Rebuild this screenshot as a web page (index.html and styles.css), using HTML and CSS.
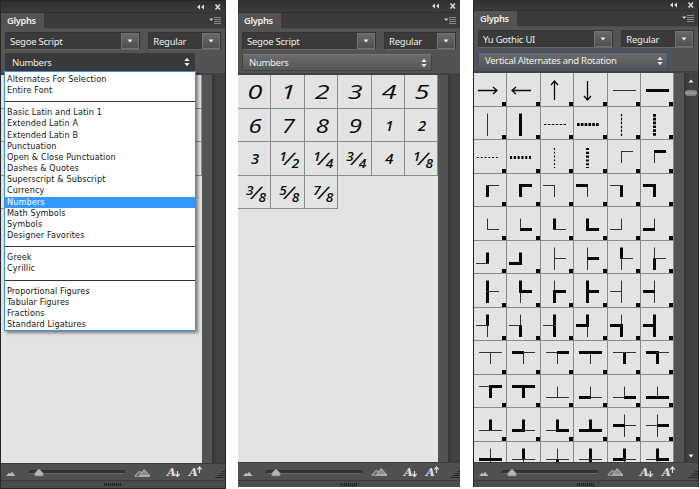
FILE: index.html
```
<!DOCTYPE html>
<html lang="en">
<head>
<meta charset="utf-8">
<title>Glyphs panels</title>
<link rel="stylesheet" href="styles.css">
</head>
<body>
<svg class="defs" aria-hidden="true">
  <symbol id="collapse" viewBox="0 0 17 8"><path d="M0 4L3 1.500V6.500zM4 4L7 1.500V6.500z" fill="#ddd"/></symbol>
  <symbol id="close" viewBox="0 0 8 8"><path d="M1.500 1.500L6 6.500M6 1.500L1.500 6.500" stroke="#ddd" stroke-width="1.500"/></symbol>
  <symbol id="menu" viewBox="0 0 13 9"><path d="M0 2.500H4.500L2.200 5z" fill="#ccc"/><path d="M5 1.500H12M5 3.500H12M5 5.500H12M5 7.500H12" stroke="#929292" stroke-width=".9"/></symbol>
  <symbol id="down" viewBox="0 0 6 4"><path d="M.5 .5H5.500L3 3.500z" fill="#ededed"/></symbol>
  <symbol id="updown" viewBox="0 0 6 10"><path d="M.3 4L3 .8L5.700 4zM.3 6L3 9.200L5.700 6z" fill="#e4e4e4"/></symbol>
  <symbol id="hill" viewBox="0 0 10 5"><path d="M0 5L3 1.800L4.300 3L6 .8L9.500 5z" fill="#bbb"/></symbol>
  <symbol id="hills" viewBox="0 0 17 9"><path d="M.8 8L5.500 3L8 5.500" stroke="#b8b8b8" fill="#777"/><path d="M5.500 8L10.200 1.500L16 8z" fill="#8c8c8c" stroke="#c4c4c4" stroke-width=".8"/><path d="M.8 8.200H16" stroke="#ccc" stroke-width=".8"/></symbol>
  <symbol id="thumb" viewBox="0 0 10 9"><path d="M5 .8L9.200 5V8H.8V5z" fill="#b5b5b5" stroke="#777" stroke-width=".6"/></symbol>
  <symbol id="smaller" viewBox="0 0 5 8"><path d="M2.500 1V5.500M.3 4L2.500 6.500L4.700 4" fill="none" stroke="#ddd" stroke-width="1.200"/></symbol>
  <symbol id="larger" viewBox="0 0 5 8"><path d="M2.500 2V7M.3 3.500L2.500 1L4.700 3.500" fill="none" stroke="#ddd" stroke-width="1.200"/></symbol>
  <symbol id="resize" viewBox="0 0 10 9"><path d="M7 2.500H10M4.500 4.500H10M2.500 6.500H10M0 8.500H10" stroke="#282828"/></symbol>
</svg>

<main class="stage">
  <section class="panel first">
    <header class="titlebar"><svg class="i-collapse"><use href="#collapse"/></svg><svg class="i-close"><use href="#close"/></svg></header>
    <nav class="tabs"><span class="tab">Glyphs</span><svg class="i-menu"><use href="#menu"/></svg></nav>
    <div class="controls">
      <div class="row">
        <div class="combo family"><span>Segoe Script</span><i><svg><use href="#down"/></svg></i></div>
        <div class="combo style"><span>Regular</span><i><svg><use href="#down"/></svg></i></div>
      </div>
      <div class="select open"><span>Numbers</span><svg><use href="#updown"/></svg>
        <ul class="options">
          <li>Alternates For Selection</li><li>Entire Font</li><li class="sep"></li>
          <li>Basic Latin and Latin 1</li><li>Extended Latin A</li><li>Extended Latin B</li><li>Punctuation</li><li>Open &amp; Close Punctuation</li><li>Dashes &amp; Quotes</li><li>Superscript &amp; Subscript</li><li>Currency</li><li class="on">Numbers</li><li>Math Symbols</li><li>Symbols</li><li>Designer Favorites</li><li class="sep"></li>
          <li>Greek</li><li>Cyrillic</li><li class="sep"></li>
          <li>Proportional Figures</li><li>Tabular Figures</li><li>Fractions</li><li>Standard Ligatures</li>
        </ul>
      </div>
    </div>
    <div class="view"><div class="grid" data-blank="21"></div><div class="gutter"></div><div class="track"></div></div>
    <footer class="zoombar"><svg class="i-hill"><use href="#hill"/></svg><div class="slider"><svg><use href="#thumb"/></svg></div><svg class="i-hills"><use href="#hills"/></svg><span class="size a1">A<svg><use href="#smaller"/></svg></span><span class="size a2">A<svg><use href="#larger"/></svg></span><svg class="i-resize"><use href="#resize"/></svg></footer>
    <div class="grip"><i></i></div>
  </section>

  <section class="panel second">
    <header class="titlebar"><svg class="i-collapse"><use href="#collapse"/></svg><svg class="i-close"><use href="#close"/></svg></header>
    <nav class="tabs"><span class="tab">Glyphs</span><svg class="i-menu"><use href="#menu"/></svg></nav>
    <div class="controls">
      <div class="row">
        <div class="combo family"><span>Segoe Script</span><i><svg><use href="#down"/></svg></i></div>
        <div class="combo style"><span>Regular</span><i><svg><use href="#down"/></svg></i></div>
      </div>
      <div class="select"><span>Numbers</span><svg><use href="#updown"/></svg></div>
    </div>
    <div class="view">
      <div class="grid">
        <div class="cell"><b>0</b></div><div class="cell"><b>1</b></div><div class="cell"><b>2</b></div><div class="cell"><b>3</b></div><div class="cell"><b>4</b></div><div class="cell"><b>5</b></div>
        <div class="cell"><b class="m">6</b></div><div class="cell"><b class="m">7</b></div><div class="cell"><b class="m">8</b></div><div class="cell"><b class="m">9</b></div><div class="cell"><b class="s">1</b></div><div class="cell"><b class="s">2</b></div>
        <div class="cell"><b class="s">3</b></div><div class="cell"><b class="f"><u>1</u><em>/</em><s>2</s></b></div><div class="cell"><b class="f"><u>1</u><em>/</em><s>4</s></b></div><div class="cell"><b class="f"><u>3</u><em>/</em><s>4</s></b></div><div class="cell"><b class="s">4</b></div><div class="cell"><b class="f"><u>1</u><em>/</em><s>8</s></b></div>
        <div class="cell"><b class="f"><u>3</u><em>/</em><s>8</s></b></div><div class="cell"><b class="f"><u>5</u><em>/</em><s>8</s></b></div><div class="cell"><b class="f"><u>7</u><em>/</em><s>8</s></b></div>
      </div>
      <div class="gutter"></div><div class="track"></div>
    </div>
    <footer class="zoombar"><svg class="i-hill"><use href="#hill"/></svg><div class="slider"><svg><use href="#thumb"/></svg></div><svg class="i-hills"><use href="#hills"/></svg><span class="size a1">A<svg><use href="#smaller"/></svg></span><span class="size a2">A<svg><use href="#larger"/></svg></span><svg class="i-resize"><use href="#resize"/></svg></footer>
    <div class="grip"><i></i></div>
  </section>

  <section class="panel third">
    <header class="titlebar"><svg class="i-collapse"><use href="#collapse"/></svg><svg class="i-close"><use href="#close"/></svg></header>
    <nav class="tabs"><span class="tab">Glyphs</span><svg class="i-menu"><use href="#menu"/></svg></nav>
    <div class="controls">
      <div class="row">
        <div class="combo family"><span>Yu Gothic UI</span><i><svg><use href="#down"/></svg></i></div>
        <div class="combo style"><span>Regular</span><i><svg><use href="#down"/></svg></i></div>
      </div>
      <div class="select focus"><span>Vertical Alternates and Rotation</span><svg><use href="#updown"/></svg></div>
    </div>
    <div class="view"><div class="grid" id="strokes"></div><div class="gutter"></div><div class="track full"><svg class="up"><use href="#down"/></svg><i></i><svg class="dn"><use href="#down"/></svg></div></div>
    <footer class="zoombar"><svg class="i-hill"><use href="#hill"/></svg><div class="slider"><svg><use href="#thumb"/></svg></div><svg class="i-hills"><use href="#hills"/></svg><span class="size a1">A<svg><use href="#smaller"/></svg></span><span class="size a2">A<svg><use href="#larger"/></svg></span><svg class="i-resize"><use href="#resize"/></svg></footer>
    <div class="grip"><i></i></div>
  </section>
</main>
<script src="glyphs.js"></script>
</body>
</html>
```
FILE: styles.css
```
* { box-sizing: border-box; }
body { margin: 0; width: 700px; height: 489px; overflow: hidden; background: #fff; }
.defs { position: absolute; width: 0; height: 0; }
svg { display: block; flex: none; }
.stage { display: flex; align-items: flex-start; }
.panel {
  --top: 13px; --pad: 4px;
  display: flex; flex-direction: column; flex: none;
  width: 222px; height: 487px;
  background: #535353; color: #ededed;
  font: 9.500px "Noto Sans", sans-serif; letter-spacing: -.25px;
}
.first { width: 226px; height: 489px; border: 1px solid #272727; --top: 12px; }
.second { margin-left: 12px; }
.third { width: 226px; margin-left: 13px; border: 1px solid #272727; border-top: 0; border-bottom: 0; --top: 11px; }

.titlebar { height: var(--top); background: linear-gradient(#303030, #3b3b3b); display: flex; align-items: center; justify-content: flex-end; padding-right: 3px; flex: none; border-bottom: 1px solid #303030; }
.i-collapse { width: 17px; height: 8px; }
.i-close { width: 8px; height: 8px; }
.tabs { height: 16px; background: #3a3a3a; display: flex; justify-content: space-between; align-items: center; flex: none; padding-right: 1px; border-bottom: 1px solid #4a4a4a; }
.tab { width: 43px; height: 16px; line-height: 16px; padding-left: 6px; background: #535353; font-weight: 600; font-size: 9.300px; letter-spacing: -.35px; }
.i-menu { width: 13px; height: 9px; margin-right: 2px; }

.controls { height: 46px; padding: 3px 4px 0 var(--pad); flex: none; border-bottom: 2px solid #424242; }
.row { display: flex; gap: 8px; }
.combo { display: flex; height: 18px; background: #3a3a3a; border: 1px solid #343434; border-bottom-color: #676767; line-height: 17px; justify-content: space-between; }
.combo span { padding-left: 4px; }
.combo i { width: 18px; background: linear-gradient(#696969, #505050); border: 1px solid #717171; display: flex; align-items: center; justify-content: center; }
.combo i svg { width: 6px; height: 4px; }
.family { width: 136px; }
.style { width: 73px; }
.select { position: relative; width: 190px; height: 17px; margin-top: 4px; padding: 0 5px 0 6px; display: flex; align-items: center; justify-content: space-between; background: linear-gradient(#6b6b6b, #565656); border: 1px solid #404040; border-top-color: #777; border-radius: 2px; letter-spacing: -.3px; }
.select > svg { width: 6px; height: 10px; margin-right: -1px; }
.open { background: #393939; border-color: #343c48; height: 18px; margin-top: 3px; }
.focus { border-color: #3d5070; box-shadow: 0 0 0 1px #46546c; }
.options { position: absolute; z-index: 2; left: -2px; top: 17px; width: 192px; height: 260px; margin: 0; padding: 1.800px 0 0; list-style: none; background: #fff; border: 1px solid #3d8fdb; border-width: 1px 1.500px; box-shadow: 2px 2px 3px rgba(0,0,0,.45); color: #151515; font: 9px "DejaVu Sans Condensed", "DejaVu Sans", sans-serif; font-stretch: condensed; letter-spacing: .12px; }
.options li { height: 11.170px; line-height: 11.170px; padding-left: 2px; white-space: nowrap; }
.options .sep { background: linear-gradient(#333, #333) 0 5px / 100% 1px no-repeat; }
.options .on { background: #3399ff; color: #fff; }

.view { display: flex; flex: 1; min-height: 0; }
.grid { width: 201px; display: grid; grid-template-columns: repeat(6, 33.500px); grid-auto-rows: 33.500px; align-content: start; background: #e3e3e3; overflow: hidden; }
.second .grid, .third .grid { width: 200px; grid-template-columns: 33px repeat(4, 33.500px) 33px; }
.gutter { width: 10px; background: #535353; }
.track { flex: 1; background: linear-gradient(90deg, #343434, #414141 40%, #424242); }
.cell { position: relative; border-right: 1px solid #8b8b8b; border-bottom: 1px solid #8b8b8b; color: #0c0c0c; letter-spacing: 0; }
.third .cell::after { content: ""; position: absolute; right: 0; bottom: 0; width: 4px; height: 4px; background: #080808; }
.cell svg { width: 33px; height: 33px; }
.cell b { display: block; text-align: center; font: italic 500 20px/34px "Open Sans", sans-serif; transform: translateX(1px) scaleX(1.350); }
.cell .m { transform: translateX(1px) scaleX(1.200); }
.cell .s { font-size: 13.500px; font-weight: 600; line-height: 35px; transform: translateX(1px) scaleX(1.100); }
.cell .f { display: flex; justify-content: center; align-items: flex-start; font-size: 13px; font-weight: 600; line-height: 13px; padding-top: 8px; transform: translateX(2px) scaleX(1.050); }
.f u, .f s { text-decoration: none; }
.f em { font-size: 17px; line-height: 18px; margin: 0 -1px; transform: skewX(-18deg); }
.f s { margin-top: 7px; }

.track.full { display: flex; flex-direction: column; align-items: center; padding: 6px 0 2px; }
.track svg { width: 6px; height: 4px; }
.track .up { transform: scaleY(-1); }
.track i { width: 12px; height: 6px; margin-top: 7px; border-radius: 3px; background: linear-gradient(#777, #999, #777); }
.track .dn { margin-top: auto; margin-bottom: 2px; }

.zoombar { height: 18px; flex: none; display: flex; align-items: center; border-top: 1px solid #3b3b3b; background: #505050; padding-left: 5px; }
.i-hill { width: 10px; height: 5px; margin-top: 3px; }
.slider { width: 96px; height: 4px; margin-left: 13px; background: #343434; border: 1px solid #2c2c2c; border-bottom-color: #6b6b6b; border-radius: 2px; }
.slider svg { width: 10px; height: 9px; margin: -3px 0 0 4px; }
.i-hills { width: 17px; height: 9px; margin-left: 9px; }
.size { display: flex; align-items: center; width: 14px; font: italic bold 11.500px/14px "DejaVu Serif", serif; letter-spacing: -.5px; color: #ddd; }
.size svg { width: 5px; height: 8px; }
.a1 { margin-left: 16px; }
.a1 svg { margin-top: 4px; }
.a2 { margin-left: 8px; }
.a2 svg { margin-top: -4px; }
.i-resize { width: 10px; height: 9px; margin: 3px 0 0 auto; }
.grip { height: 7px; flex: none; background: #4b4b4b; border-top: 1px solid #3a3a3a; display: flex; justify-content: center; align-items: center; }
.first .grip { height: 8px; }
.first .zoombar { height: 17px; }
.grip i { width: 18px; height: 3px; background: repeating-linear-gradient(90deg, #242424 0 1px, #444 1px 2px); }
```
FILE: glyphs.js
```
// Each stroke glyph lists its arm weights (U, D, L, R); 1 is light and 2 is heavy.
const rows = [
  ['right', 'left', 'up', 'down', 'h1', 'h2'],
  ['v1', 'v2', 'dh1', 'dh2', 'dv1', 'dv2'],
  ['eh1', 'eh2', 'ev1', 'ev2', 'D1R1', 'D1R2'],
  ['D2R1', 'D2R2', 'D1L1', 'D1L2', 'D2L1', 'D2L2'],
  ['U1R1', 'U1R2', 'U2R1', 'U2R2', 'U1L1', 'U1L2'],
  ['U2L1', 'U2L2', 'U1D1R1', 'U1D1R2', 'U2D1R1', 'U1D2R1'],
  ['U2D2R1', 'U2D1R2', 'U1D2R2', 'U2D2R2', 'U1D1L1', 'U1D1L2'],
  ['U2D1L1', 'U1D2L1', 'U2D2L1', 'U2D1L2', 'U1D2L2', 'U2D2L2'],
  ['D1L1R1', 'D1L2R1', 'D1L1R2', 'D1L2R2', 'D2L1R1', 'D2L2R1'],
  ['D2L1R2', 'D2L2R2', 'U1L1R1', 'U1L2R1', 'U1L1R2', 'U1L2R2'],
  ['U2L1R1', 'U2L2R1', 'U2L1R2', 'U2L2R2', 'U1D1L2R1', 'U1D1L1R2'],
  ['U1D1L2R2', 'U2D1L1R1', 'U1D2L1R1', 'U2D2L1R1', 'U2D1L2R1', 'U2D1L1R2']
];
const weight = { 1: 1, 2: 3 };
const path = (d, w, dash) =>
  `<path d="${d}" fill="none" stroke="${w > 1 ? '#080808' : '#333'}" stroke-width="${w}"${dash ? ` stroke-dasharray="${dash}"` : ''}/>`;
const special = {
  right: path('M4 17.5H23M19 14L23 17.5L19 21', 1.3),
  left: path('M24 17.5H5M9 14L5 17.5L9 21', 1.3),
  up: path('M13.5 27V8M10 12L13.5 8L17 12', 1.3),
  down: path('M13.5 8V27M10 23L13.5 27L17 23', 1.3),
  h1: path('M5 17.5H28', 1), h2: path('M5 17.5H28', 3),
  v1: path('M13.5 6.5V29', 1), v2: path('M13.5 6.5V29', 3),
  dh1: path('M3 17.5H25', 1.2, '2.5 1.4'), dh2: path('M3 17.5H25', 3, '2.7 1.1'),
  dv1: path('M13.5 7V29', 1.2, '2.5 1.4'), dv2: path('M13.5 7V29', 3, '2.7 1.1'),
  eh1: path('M3 17.5H24', 1.2, '1.8 2'), eh2: path('M3 17.5H24', 3, '2.1 1.7'),
  ev1: path('M13.5 8V28', 1.2, '1.8 2'), ev2: path('M13.5 8V28', 3, '2.1 1.7')
};

function strokes(code) {
  if (special[code]) return special[code];
  const arm = Object.fromEntries(code.match(/[UDLR]\d/g).map(s => [s[0], weight[s[1]]]));
  const x = arm.L && arm.R ? 16.5 : 13.5;
  const y = arm.U && arm.D ? 17.5 : arm.U ? 22.5 : 11.5;
  const hv = Math.max(arm.U || 0, arm.D || 0) / 2;
  const hh = Math.max(arm.L || 0, arm.R || 0) / 2;
  return (arm.U ? path(`M${x} ${y + hh}V${y - 11}`, arm.U) : '') +
    (arm.D ? path(`M${x} ${y - hh}V${y + 11.5}`, arm.D) : '') +
    (arm.L ? path(`M${x + hv} ${y}H${x - 11.5}`, arm.L) : '') +
    (arm.R ? path(`M${x - hv} ${y}H${x + 11.5}`, arm.R) : '');
}

document.getElementById('strokes').innerHTML = rows.flat()
  .map(code => `<div class="cell"><svg viewBox="0 0 33 33">${strokes(code)}</svg></div>`).join('');
document.querySelectorAll('[data-blank]').forEach(grid => {
  grid.innerHTML = '<div class="cell"></div>'.repeat(+grid.dataset.blank);
});
```
